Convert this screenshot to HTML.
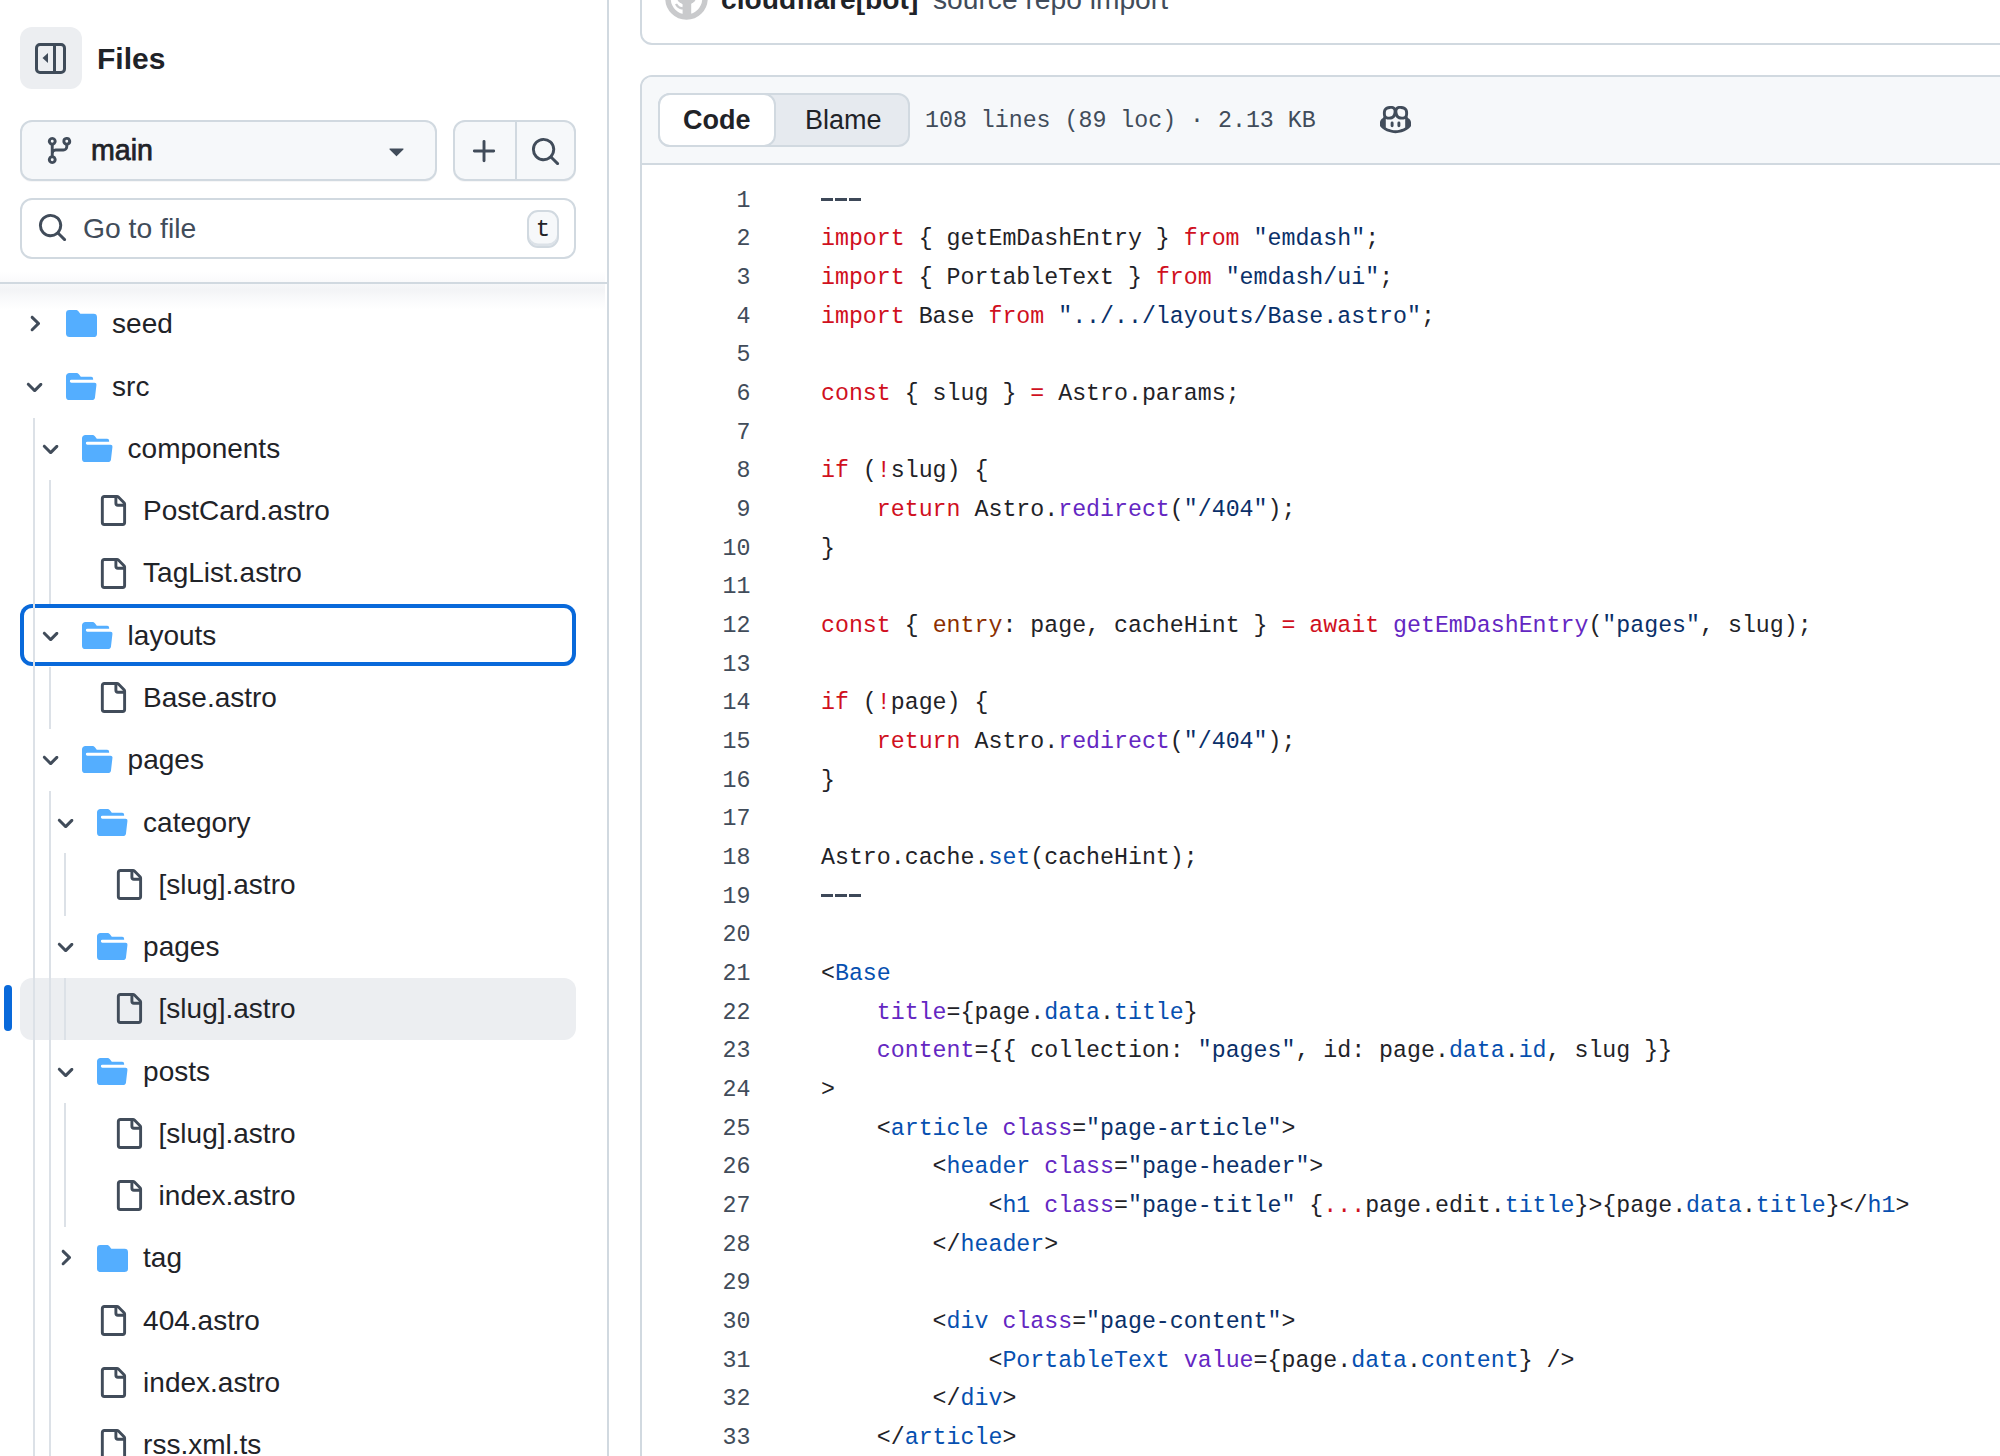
<!DOCTYPE html>
<html><head><meta charset="utf-8">
<style>
*{box-sizing:border-box}
html,body{margin:0;padding:0}
body{width:2000px;height:1456px;overflow:hidden;position:relative;background:#fff;font-family:"Liberation Sans",sans-serif;color:#1f2328}
.abs{position:absolute}
svg{display:block}
/* sidebar */
#side{position:absolute;left:0;top:0;width:607px;height:1456px;background:#fff}
#sideborder{position:absolute;left:607px;top:0;width:2px;height:1456px;background:#d1d9e0}
.btn{position:absolute;border:2px solid #d1d9e0;border-radius:12px;background:#f6f8fa}
#hdrline{position:absolute;left:-20px;top:282px;width:627px;height:2px;background:#d1d9e0;}
#hdrshadow{position:absolute;left:0;top:272px;width:605px;height:38px;background:linear-gradient(rgba(240,242,245,0) 0px,rgba(244,245,247,0.5) 10px,rgba(244,245,247,0.9) 13px,#f3f4f6 18px,rgba(246,247,249,0.7) 26px,rgba(255,255,255,0) 38px)}
.row{position:absolute;left:20px;width:556px;height:62px;border-radius:12px}
.row .ic{position:absolute;top:15.5px;width:31px;height:31px}
.row .ch{position:absolute;top:19.4px;width:23.2px;height:23.2px}
.row .tn{position:absolute;top:0.4px;height:62px;line-height:62px;font-size:28px;color:#1f2328;white-space:nowrap}
.row.sel{background:#eceef1}
.row.focus{box-shadow:inset 0 0 0 4px #0969da}
.guide{position:absolute;width:2px;background:#dce1e7}
/* main */
.ln{position:absolute;left:0;height:38.67px;line-height:38.67px;white-space:pre;font-family:"Liberation Mono",monospace;font-size:23.25px;color:#1f2328}
.ln .num{position:absolute;left:647.5px;width:103px;text-align:right;color:#414c5a}
.ln .src{position:absolute;left:821px}
</style></head><body>
<div id="side">
  <div class="abs" style="left:20px;top:27px;width:62px;height:62px;border-radius:12px;background:#eceef1"></div>
  <svg class="abs" style="left:35px;top:43px" width="31" height="31" viewBox="0 0 31 31">
    <rect x="1.5" y="1.5" width="28" height="28" rx="3.5" fill="none" stroke="#3f4b59" stroke-width="3"/>
    <rect x="18" y="1" width="3" height="29" fill="#3f4b59"/>
    <path d="M7.5 15 L13 10 L13 20 Z" fill="#3f4b59"/>
  </svg>
  <div class="abs" style="left:97px;top:38.5px;font-size:30px;font-weight:bold;line-height:40px">Files</div>

  <div class="btn" style="left:20px;top:120px;width:417px;height:61px;box-shadow:0 1px 0 rgba(31,35,40,0.04)"></div>
  <svg class="abs" style="left:44.4px;top:135px" width="31" height="31" viewBox="0 0 16 16"><path fill="#414c5a" d="M9.5 3.25a2.25 2.25 0 1 1 3 2.122V6A2.5 2.5 0 0 1 10 8.5H6a1 1 0 0 0-1 1v1.128a2.251 2.251 0 1 1-1.5 0V5.372a2.25 2.25 0 1 1 1.5 0v1.836A2.493 2.493 0 0 1 6 7h4a1 1 0 0 0 1-1v-.628A2.25 2.25 0 0 1 9.5 3.25Zm-6 0a.75.75 0 1 0 1.5 0 .75.75 0 0 0-1.5 0Zm8.25-.75a.75.75 0 1 0 0 1.5.75.75 0 0 0 0-1.5ZM4.25 12a.75.75 0 1 0 0 1.5.75.75 0 0 0 0-1.5Z"/></svg>
  <div class="abs" style="left:91px;top:129.8px;font-size:28.6px;line-height:40px;-webkit-text-stroke:0.75px #1f2328">main</div>
  <svg class="abs" style="left:381.2px;top:135px" width="31" height="31" viewBox="0 0 16 16"><path fill="#414c5a" d="m4.427 7.427 3.396 3.396a.25.25 0 0 0 .354 0l3.396-3.396A.25.25 0 0 0 11.396 7H4.604a.25.25 0 0 0-.177.427Z"/></svg>

  <div class="btn" style="left:453px;top:120px;width:123px;height:61px;box-shadow:0 1px 0 rgba(31,35,40,0.04)"></div>
  <div class="abs" style="left:514.5px;top:121px;width:2px;height:59px;background:#d1d9e0"></div>
  <svg class="abs" style="left:469px;top:135.5px" width="31" height="31" viewBox="0 0 16 16"><path fill="#414c5a" d="M7.75 2a.75.75 0 0 1 .75.75V7h4.25a.75.75 0 0 1 0 1.5H8.5v4.25a.75.75 0 0 1-1.5 0V8.5H2.75a.75.75 0 0 1 0-1.5H7V2.75A.75.75 0 0 1 7.75 2Z"/></svg>
  <svg class="abs" style="left:530.3px;top:135.5px" width="31" height="31" viewBox="0 0 16 16"><path fill="#414c5a" d="M10.68 11.74a6 6 0 0 1-7.922-8.982 6 6 0 0 1 8.982 7.922l3.04 3.04a.749.749 0 0 1-.326 1.275.749.749 0 0 1-.734-.215ZM11.5 7a4.499 4.499 0 1 0-8.997 0A4.499 4.499 0 0 0 11.5 7Z"/></svg>

  <div class="abs" style="left:20px;top:197.5px;width:556px;height:61px;border:2px solid #d1d9e0;border-radius:12px;background:#fff"></div>
  <svg class="abs" style="left:36.8px;top:212px" width="31" height="31" viewBox="0 0 16 16"><path fill="#414c5a" d="M10.68 11.74a6 6 0 0 1-7.922-8.982 6 6 0 0 1 8.982 7.922l3.04 3.04a.749.749 0 0 1-.326 1.275.749.749 0 0 1-.734-.215ZM11.5 7a4.499 4.499 0 1 0-8.997 0A4.499 4.499 0 0 0 11.5 7Z"/></svg>
  <div class="abs" style="left:83px;top:208px;font-size:28.3px;line-height:40px;color:#414c5a">Go to file</div>
  <div class="abs" style="left:527px;top:210px;width:32px;height:38px;border:2px solid #d1d9e0;border-radius:11px;background:#f6f8fa;box-shadow:inset 0 -2.5px 0 #dce2e8"></div>
  <div class="abs" style="left:527px;top:211.5px;width:32px;height:36px;text-align:center;font-size:24px;line-height:36px;font-family:'Liberation Mono',monospace">t</div>

  <div id="hdrshadow"></div>
  <div id="hdrline"></div>
  <div class="row" style="top:292.90px"><div class="ch" style="left:3.3px"><svg viewBox="0 0 12 12" width="23.2" height="23.2"><path fill="#414c5a" d="M4.7 10c-.2 0-.4-.1-.5-.2-.3-.3-.3-.8 0-1.1L6.9 6 4.2 3.3c-.3-.3-.3-.8 0-1.1.3-.3.8-.3 1.1 0l3.3 3.2c.3.3.3.8 0 1.1L5.3 9.7c-.2.2-.4.3-.6.3Z"/></svg></div><div class="ic" style="left:46.0px"><svg viewBox="0 0 16 16" width="31" height="31"><path fill="#54aeff" d="M1.75 1A1.75 1.75 0 0 0 0 2.75v10.5C0 14.216.784 15 1.75 15h12.5A1.75 1.75 0 0 0 16 13.25v-8.5A1.75 1.75 0 0 0 14.25 3H7.5a.25.25 0 0 1-.2-.1l-.9-1.2C6.07 1.26 5.55 1 5 1H1.75Z"/></svg></div><div class="tn" style="left:92.1px">seed</div></div>
<div class="row" style="top:355.18px"><div class="ch" style="left:3.3px"><svg viewBox="0 0 12 12" width="23.2" height="23.2"><path fill="#414c5a" d="M6 8.825c-.2 0-.4-.1-.5-.2l-3.3-3.3c-.3-.3-.3-.8 0-1.1.3-.3.8-.3 1.1 0L6 7.025l2.7-2.7c.3-.3.8-.3 1.1 0 .3.3.3.8 0 1.1l-3.2 3.2c-.2.2-.4.2-.6.2Z"/></svg></div><div class="ic" style="left:46.0px"><svg viewBox="0 0 16 16" width="31" height="31"><path fill="#54aeff" d="M.513 1.513A1.75 1.75 0 0 1 1.75 1h3.5c.55 0 1.07.26 1.4.7l.9 1.2a.25.25 0 0 0 .2.1H13a1 1 0 0 1 1 1v.5H2.75a.75.75 0 0 0 0 1.5h11.978a1 1 0 0 1 .994 1.117L15 13.25A1.75 1.75 0 0 1 13.25 15H1.75A1.75 1.75 0 0 1 0 13.25V2.75c0-.464.184-.91.513-1.237Z"/></svg></div><div class="tn" style="left:92.1px">src</div></div>
<div class="row" style="top:417.46px"><div class="ch" style="left:18.8px"><svg viewBox="0 0 12 12" width="23.2" height="23.2"><path fill="#414c5a" d="M6 8.825c-.2 0-.4-.1-.5-.2l-3.3-3.3c-.3-.3-.3-.8 0-1.1.3-.3.8-.3 1.1 0L6 7.025l2.7-2.7c.3-.3.8-.3 1.1 0 .3.3.3.8 0 1.1l-3.2 3.2c-.2.2-.4.2-.6.2Z"/></svg></div><div class="ic" style="left:61.5px"><svg viewBox="0 0 16 16" width="31" height="31"><path fill="#54aeff" d="M.513 1.513A1.75 1.75 0 0 1 1.75 1h3.5c.55 0 1.07.26 1.4.7l.9 1.2a.25.25 0 0 0 .2.1H13a1 1 0 0 1 1 1v.5H2.75a.75.75 0 0 0 0 1.5h11.978a1 1 0 0 1 .994 1.117L15 13.25A1.75 1.75 0 0 1 13.25 15H1.75A1.75 1.75 0 0 1 0 13.25V2.75c0-.464.184-.91.513-1.237Z"/></svg></div><div class="tn" style="left:107.6px">components</div></div>
<div class="row" style="top:479.74px"><div class="ic" style="left:77.1px"><svg viewBox="0 0 16 16" width="31" height="31"><path fill="#414c5a" d="M2 1.75C2 .784 2.784 0 3.75 0h6.586c.464 0 .909.184 1.237.513l2.914 2.914c.329.328.513.773.513 1.237v9.586A1.75 1.75 0 0 1 13.25 16h-9.5A1.75 1.75 0 0 1 2 14.25Zm1.75-.25a.25.25 0 0 0-.25.25v12.5c0 .138.112.25.25.25h9.5a.25.25 0 0 0 .25-.25V6h-2.75A1.75 1.75 0 0 1 9 4.25V1.5Zm6.75.062V4.25c0 .138.112.25.25.25h2.688l-.011-.013-2.914-2.914-.013-.011Z"/></svg></div><div class="tn" style="left:123.1px">PostCard.astro</div></div>
<div class="row" style="top:542.02px"><div class="ic" style="left:77.1px"><svg viewBox="0 0 16 16" width="31" height="31"><path fill="#414c5a" d="M2 1.75C2 .784 2.784 0 3.75 0h6.586c.464 0 .909.184 1.237.513l2.914 2.914c.329.328.513.773.513 1.237v9.586A1.75 1.75 0 0 1 13.25 16h-9.5A1.75 1.75 0 0 1 2 14.25Zm1.75-.25a.25.25 0 0 0-.25.25v12.5c0 .138.112.25.25.25h9.5a.25.25 0 0 0 .25-.25V6h-2.75A1.75 1.75 0 0 1 9 4.25V1.5Zm6.75.062V4.25c0 .138.112.25.25.25h2.688l-.011-.013-2.914-2.914-.013-.011Z"/></svg></div><div class="tn" style="left:123.1px">TagList.astro</div></div>
<div class="row focus" style="top:604.30px"><div class="ch" style="left:18.8px"><svg viewBox="0 0 12 12" width="23.2" height="23.2"><path fill="#414c5a" d="M6 8.825c-.2 0-.4-.1-.5-.2l-3.3-3.3c-.3-.3-.3-.8 0-1.1.3-.3.8-.3 1.1 0L6 7.025l2.7-2.7c.3-.3.8-.3 1.1 0 .3.3.3.8 0 1.1l-3.2 3.2c-.2.2-.4.2-.6.2Z"/></svg></div><div class="ic" style="left:61.5px"><svg viewBox="0 0 16 16" width="31" height="31"><path fill="#54aeff" d="M.513 1.513A1.75 1.75 0 0 1 1.75 1h3.5c.55 0 1.07.26 1.4.7l.9 1.2a.25.25 0 0 0 .2.1H13a1 1 0 0 1 1 1v.5H2.75a.75.75 0 0 0 0 1.5h11.978a1 1 0 0 1 .994 1.117L15 13.25A1.75 1.75 0 0 1 13.25 15H1.75A1.75 1.75 0 0 1 0 13.25V2.75c0-.464.184-.91.513-1.237Z"/></svg></div><div class="tn" style="left:107.6px">layouts</div></div>
<div class="row" style="top:666.58px"><div class="ic" style="left:77.1px"><svg viewBox="0 0 16 16" width="31" height="31"><path fill="#414c5a" d="M2 1.75C2 .784 2.784 0 3.75 0h6.586c.464 0 .909.184 1.237.513l2.914 2.914c.329.328.513.773.513 1.237v9.586A1.75 1.75 0 0 1 13.25 16h-9.5A1.75 1.75 0 0 1 2 14.25Zm1.75-.25a.25.25 0 0 0-.25.25v12.5c0 .138.112.25.25.25h9.5a.25.25 0 0 0 .25-.25V6h-2.75A1.75 1.75 0 0 1 9 4.25V1.5Zm6.75.062V4.25c0 .138.112.25.25.25h2.688l-.011-.013-2.914-2.914-.013-.011Z"/></svg></div><div class="tn" style="left:123.1px">Base.astro</div></div>
<div class="row" style="top:728.86px"><div class="ch" style="left:18.8px"><svg viewBox="0 0 12 12" width="23.2" height="23.2"><path fill="#414c5a" d="M6 8.825c-.2 0-.4-.1-.5-.2l-3.3-3.3c-.3-.3-.3-.8 0-1.1.3-.3.8-.3 1.1 0L6 7.025l2.7-2.7c.3-.3.8-.3 1.1 0 .3.3.3.8 0 1.1l-3.2 3.2c-.2.2-.4.2-.6.2Z"/></svg></div><div class="ic" style="left:61.5px"><svg viewBox="0 0 16 16" width="31" height="31"><path fill="#54aeff" d="M.513 1.513A1.75 1.75 0 0 1 1.75 1h3.5c.55 0 1.07.26 1.4.7l.9 1.2a.25.25 0 0 0 .2.1H13a1 1 0 0 1 1 1v.5H2.75a.75.75 0 0 0 0 1.5h11.978a1 1 0 0 1 .994 1.117L15 13.25A1.75 1.75 0 0 1 13.25 15H1.75A1.75 1.75 0 0 1 0 13.25V2.75c0-.464.184-.91.513-1.237Z"/></svg></div><div class="tn" style="left:107.6px">pages</div></div>
<div class="row" style="top:791.14px"><div class="ch" style="left:34.3px"><svg viewBox="0 0 12 12" width="23.2" height="23.2"><path fill="#414c5a" d="M6 8.825c-.2 0-.4-.1-.5-.2l-3.3-3.3c-.3-.3-.3-.8 0-1.1.3-.3.8-.3 1.1 0L6 7.025l2.7-2.7c.3-.3.8-.3 1.1 0 .3.3.3.8 0 1.1l-3.2 3.2c-.2.2-.4.2-.6.2Z"/></svg></div><div class="ic" style="left:77.0px"><svg viewBox="0 0 16 16" width="31" height="31"><path fill="#54aeff" d="M.513 1.513A1.75 1.75 0 0 1 1.75 1h3.5c.55 0 1.07.26 1.4.7l.9 1.2a.25.25 0 0 0 .2.1H13a1 1 0 0 1 1 1v.5H2.75a.75.75 0 0 0 0 1.5h11.978a1 1 0 0 1 .994 1.117L15 13.25A1.75 1.75 0 0 1 13.25 15H1.75A1.75 1.75 0 0 1 0 13.25V2.75c0-.464.184-.91.513-1.237Z"/></svg></div><div class="tn" style="left:123.1px">category</div></div>
<div class="row" style="top:853.42px"><div class="ic" style="left:92.6px"><svg viewBox="0 0 16 16" width="31" height="31"><path fill="#414c5a" d="M2 1.75C2 .784 2.784 0 3.75 0h6.586c.464 0 .909.184 1.237.513l2.914 2.914c.329.328.513.773.513 1.237v9.586A1.75 1.75 0 0 1 13.25 16h-9.5A1.75 1.75 0 0 1 2 14.25Zm1.75-.25a.25.25 0 0 0-.25.25v12.5c0 .138.112.25.25.25h9.5a.25.25 0 0 0 .25-.25V6h-2.75A1.75 1.75 0 0 1 9 4.25V1.5Zm6.75.062V4.25c0 .138.112.25.25.25h2.688l-.011-.013-2.914-2.914-.013-.011Z"/></svg></div><div class="tn" style="left:138.6px">[slug].astro</div></div>
<div class="row" style="top:915.70px"><div class="ch" style="left:34.3px"><svg viewBox="0 0 12 12" width="23.2" height="23.2"><path fill="#414c5a" d="M6 8.825c-.2 0-.4-.1-.5-.2l-3.3-3.3c-.3-.3-.3-.8 0-1.1.3-.3.8-.3 1.1 0L6 7.025l2.7-2.7c.3-.3.8-.3 1.1 0 .3.3.3.8 0 1.1l-3.2 3.2c-.2.2-.4.2-.6.2Z"/></svg></div><div class="ic" style="left:77.0px"><svg viewBox="0 0 16 16" width="31" height="31"><path fill="#54aeff" d="M.513 1.513A1.75 1.75 0 0 1 1.75 1h3.5c.55 0 1.07.26 1.4.7l.9 1.2a.25.25 0 0 0 .2.1H13a1 1 0 0 1 1 1v.5H2.75a.75.75 0 0 0 0 1.5h11.978a1 1 0 0 1 .994 1.117L15 13.25A1.75 1.75 0 0 1 13.25 15H1.75A1.75 1.75 0 0 1 0 13.25V2.75c0-.464.184-.91.513-1.237Z"/></svg></div><div class="tn" style="left:123.1px">pages</div></div>
<div class="row sel" style="top:977.98px"><div class="ic" style="left:92.6px"><svg viewBox="0 0 16 16" width="31" height="31"><path fill="#414c5a" d="M2 1.75C2 .784 2.784 0 3.75 0h6.586c.464 0 .909.184 1.237.513l2.914 2.914c.329.328.513.773.513 1.237v9.586A1.75 1.75 0 0 1 13.25 16h-9.5A1.75 1.75 0 0 1 2 14.25Zm1.75-.25a.25.25 0 0 0-.25.25v12.5c0 .138.112.25.25.25h9.5a.25.25 0 0 0 .25-.25V6h-2.75A1.75 1.75 0 0 1 9 4.25V1.5Zm6.75.062V4.25c0 .138.112.25.25.25h2.688l-.011-.013-2.914-2.914-.013-.011Z"/></svg></div><div class="tn" style="left:138.6px">[slug].astro</div></div>
<div class="row" style="top:1040.26px"><div class="ch" style="left:34.3px"><svg viewBox="0 0 12 12" width="23.2" height="23.2"><path fill="#414c5a" d="M6 8.825c-.2 0-.4-.1-.5-.2l-3.3-3.3c-.3-.3-.3-.8 0-1.1.3-.3.8-.3 1.1 0L6 7.025l2.7-2.7c.3-.3.8-.3 1.1 0 .3.3.3.8 0 1.1l-3.2 3.2c-.2.2-.4.2-.6.2Z"/></svg></div><div class="ic" style="left:77.0px"><svg viewBox="0 0 16 16" width="31" height="31"><path fill="#54aeff" d="M.513 1.513A1.75 1.75 0 0 1 1.75 1h3.5c.55 0 1.07.26 1.4.7l.9 1.2a.25.25 0 0 0 .2.1H13a1 1 0 0 1 1 1v.5H2.75a.75.75 0 0 0 0 1.5h11.978a1 1 0 0 1 .994 1.117L15 13.25A1.75 1.75 0 0 1 13.25 15H1.75A1.75 1.75 0 0 1 0 13.25V2.75c0-.464.184-.91.513-1.237Z"/></svg></div><div class="tn" style="left:123.1px">posts</div></div>
<div class="row" style="top:1102.54px"><div class="ic" style="left:92.6px"><svg viewBox="0 0 16 16" width="31" height="31"><path fill="#414c5a" d="M2 1.75C2 .784 2.784 0 3.75 0h6.586c.464 0 .909.184 1.237.513l2.914 2.914c.329.328.513.773.513 1.237v9.586A1.75 1.75 0 0 1 13.25 16h-9.5A1.75 1.75 0 0 1 2 14.25Zm1.75-.25a.25.25 0 0 0-.25.25v12.5c0 .138.112.25.25.25h9.5a.25.25 0 0 0 .25-.25V6h-2.75A1.75 1.75 0 0 1 9 4.25V1.5Zm6.75.062V4.25c0 .138.112.25.25.25h2.688l-.011-.013-2.914-2.914-.013-.011Z"/></svg></div><div class="tn" style="left:138.6px">[slug].astro</div></div>
<div class="row" style="top:1164.82px"><div class="ic" style="left:92.6px"><svg viewBox="0 0 16 16" width="31" height="31"><path fill="#414c5a" d="M2 1.75C2 .784 2.784 0 3.75 0h6.586c.464 0 .909.184 1.237.513l2.914 2.914c.329.328.513.773.513 1.237v9.586A1.75 1.75 0 0 1 13.25 16h-9.5A1.75 1.75 0 0 1 2 14.25Zm1.75-.25a.25.25 0 0 0-.25.25v12.5c0 .138.112.25.25.25h9.5a.25.25 0 0 0 .25-.25V6h-2.75A1.75 1.75 0 0 1 9 4.25V1.5Zm6.75.062V4.25c0 .138.112.25.25.25h2.688l-.011-.013-2.914-2.914-.013-.011Z"/></svg></div><div class="tn" style="left:138.6px">index.astro</div></div>
<div class="row" style="top:1227.10px"><div class="ch" style="left:34.3px"><svg viewBox="0 0 12 12" width="23.2" height="23.2"><path fill="#414c5a" d="M4.7 10c-.2 0-.4-.1-.5-.2-.3-.3-.3-.8 0-1.1L6.9 6 4.2 3.3c-.3-.3-.3-.8 0-1.1.3-.3.8-.3 1.1 0l3.3 3.2c.3.3.3.8 0 1.1L5.3 9.7c-.2.2-.4.3-.6.3Z"/></svg></div><div class="ic" style="left:77.0px"><svg viewBox="0 0 16 16" width="31" height="31"><path fill="#54aeff" d="M1.75 1A1.75 1.75 0 0 0 0 2.75v10.5C0 14.216.784 15 1.75 15h12.5A1.75 1.75 0 0 0 16 13.25v-8.5A1.75 1.75 0 0 0 14.25 3H7.5a.25.25 0 0 1-.2-.1l-.9-1.2C6.07 1.26 5.55 1 5 1H1.75Z"/></svg></div><div class="tn" style="left:123.1px">tag</div></div>
<div class="row" style="top:1289.38px"><div class="ic" style="left:77.1px"><svg viewBox="0 0 16 16" width="31" height="31"><path fill="#414c5a" d="M2 1.75C2 .784 2.784 0 3.75 0h6.586c.464 0 .909.184 1.237.513l2.914 2.914c.329.328.513.773.513 1.237v9.586A1.75 1.75 0 0 1 13.25 16h-9.5A1.75 1.75 0 0 1 2 14.25Zm1.75-.25a.25.25 0 0 0-.25.25v12.5c0 .138.112.25.25.25h9.5a.25.25 0 0 0 .25-.25V6h-2.75A1.75 1.75 0 0 1 9 4.25V1.5Zm6.75.062V4.25c0 .138.112.25.25.25h2.688l-.011-.013-2.914-2.914-.013-.011Z"/></svg></div><div class="tn" style="left:123.1px">404.astro</div></div>
<div class="row" style="top:1351.66px"><div class="ic" style="left:77.1px"><svg viewBox="0 0 16 16" width="31" height="31"><path fill="#414c5a" d="M2 1.75C2 .784 2.784 0 3.75 0h6.586c.464 0 .909.184 1.237.513l2.914 2.914c.329.328.513.773.513 1.237v9.586A1.75 1.75 0 0 1 13.25 16h-9.5A1.75 1.75 0 0 1 2 14.25Zm1.75-.25a.25.25 0 0 0-.25.25v12.5c0 .138.112.25.25.25h9.5a.25.25 0 0 0 .25-.25V6h-2.75A1.75 1.75 0 0 1 9 4.25V1.5Zm6.75.062V4.25c0 .138.112.25.25.25h2.688l-.011-.013-2.914-2.914-.013-.011Z"/></svg></div><div class="tn" style="left:123.1px">index.astro</div></div>
<div class="row" style="top:1413.94px"><div class="ic" style="left:77.1px"><svg viewBox="0 0 16 16" width="31" height="31"><path fill="#414c5a" d="M2 1.75C2 .784 2.784 0 3.75 0h6.586c.464 0 .909.184 1.237.513l2.914 2.914c.329.328.513.773.513 1.237v9.586A1.75 1.75 0 0 1 13.25 16h-9.5A1.75 1.75 0 0 1 2 14.25Zm1.75-.25a.25.25 0 0 0-.25.25v12.5c0 .138.112.25.25.25h9.5a.25.25 0 0 0 .25-.25V6h-2.75A1.75 1.75 0 0 1 9 4.25V1.5Zm6.75.062V4.25c0 .138.112.25.25.25h2.688l-.011-.013-2.914-2.914-.013-.011Z"/></svg></div><div class="tn" style="left:123.1px">rss.xml.ts</div></div>
  <div class="guide" style="left:33px;top:417.5px;height:1121.0px"></div>
<div class="guide" style="left:48.5px;top:479.7px;height:124.6px"></div>
<div class="guide" style="left:48.5px;top:666.6px;height:62.3px"></div>
<div class="guide" style="left:48.5px;top:791.1px;height:747.4px"></div>
<div class="guide" style="left:64px;top:853.4px;height:62.3px"></div>
<div class="guide" style="left:64px;top:978.0px;height:62.3px"></div>
<div class="guide" style="left:64px;top:1102.5px;height:124.6px"></div>
  <div class="abs" style="left:4px;top:985px;width:8px;height:46px;border-radius:4px;background:#0969da"></div>
</div>
<div id="sideborder"></div>

<!-- commit box -->
<div class="abs" style="left:640px;top:-40px;width:1500px;height:85px;border:2px solid #d1d9e0;border-radius:12px;background:#fff"></div>
<svg class="abs" style="left:665.4px;top:-23.2px" width="43" height="43" viewBox="0 0 43 43">
  <circle cx="21.5" cy="21.5" r="18.5" fill="#fff" stroke="#c9cacc" stroke-width="5.5"/>
  <ellipse cx="21.5" cy="19" rx="10" ry="9" fill="#c9cacc"/>
  <rect x="17.6" y="22" width="8.6" height="16" fill="#c9cacc"/>
  <path d="M11 27 Q14 32 18 31" stroke="#c9cacc" stroke-width="2.4" fill="none"/>
</svg>
<div class="abs" style="left:721px;top:-21px;font-size:28.2px;line-height:40px;font-weight:bold;color:#1f2328;white-space:nowrap">cloudflare[bot]</div>
<div class="abs" style="left:933px;top:-21px;font-size:28.2px;line-height:40px;color:#414c5a;white-space:nowrap">source repo import</div>

<!-- file box -->
<div class="abs" style="left:640px;top:75px;width:1500px;height:1500px;border:2px solid #d1d9e0;border-radius:12px;background:#fff;overflow:hidden">
  <div class="abs" style="left:0;top:0;width:100%;height:87.5px;background:#f6f8fa;border-bottom:2px solid #d1d9e0"></div>
</div>
<div class="abs" style="left:658px;top:93px;width:252px;height:54px;border:2px solid #d1d9e0;border-radius:12px;background:#e6eaef"></div>
<div class="abs" style="left:658px;top:93px;width:118px;height:54px;border:2px solid #d1d9e0;border-radius:12px;background:#fff"></div>
<div class="abs" style="left:683px;top:100px;font-size:27px;line-height:40px;font-weight:bold">Code</div>
<div class="abs" style="left:805px;top:100px;font-size:27px;line-height:40px">Blame</div>
<div class="abs" style="left:925px;top:101px;font-size:23.25px;line-height:40px;font-family:'Liberation Mono',monospace;color:#414c5a;white-space:pre">108 lines (89 loc) · 2.13 KB</div>
<svg class="abs" style="left:1380px;top:104px" width="31" height="31" viewBox="0 0 16 16"><path fill="#414c5a" d="M7.998 15.035c-4.562 0-7.873-2.914-7.998-3.749V9.338c.085-.628.677-1.686 1.588-2.065.013-.07.024-.143.036-.218.029-.183.06-.384.126-.612-.201-.508-.254-1.084-.254-1.656 0-.87.128-1.769.693-2.484.579-.733 1.494-1.124 2.724-1.261 1.206-.134 2.262.034 2.944.765.05.053.096.108.139.165.044-.057.094-.112.143-.165.682-.731 1.738-.899 2.944-.765 1.23.137 2.145.528 2.724 1.261.566.715.693 1.614.693 2.484 0 .572-.053 1.148-.254 1.656.066.228.098.429.126.612.012.076.024.148.037.218.924.385 1.522 1.471 1.591 2.095v1.872c0 .766-3.351 3.795-8.002 3.795Zm0-1.485c2.28 0 4.584-1.11 5.002-1.433V7.862l-.023-.116c-.49.21-1.075.291-1.727.291-1.146 0-2.059-.327-2.71-.991A3.222 3.222 0 0 1 8 6.303a3.24 3.240 0 0 1-.544.743c-.65.664-1.563.991-2.71.991-.652 0-1.236-.081-1.727-.291l-.023.116v4.255c.419.323 2.722 1.433 5.002 1.433ZM6.762 2.83c-.193-.206-.637-.413-1.682-.297-1.019.113-1.479.404-1.713.7-.247.312-.369.789-.369 1.554 0 .793.129 1.171.308 1.371.162.181.519.379 1.442.379.853 0 1.339-.235 1.638-.54.315-.322.527-.827.617-1.553.117-.935-.037-1.395-.241-1.614Zm4.155-.297c-1.044-.116-1.488.091-1.681.297-.204.219-.359.679-.242 1.614.091.726.303 1.231.618 1.553.299.305.784.54 1.638.54.922 0 1.280-.198 1.442-.379.179-.2.308-.578.308-1.371 0-.765-.123-1.242-.37-1.554-.233-.296-.693-.587-1.713-.7Z"/><path fill="#414c5a" d="M6.25 9.037a.75.75 0 0 1 .75.75v1.501a.75.75 0 0 1-1.5 0V9.787a.75.75 0 0 1 .75-.75Zm4.25.75v1.501a.75.75 0 0 1-1.5 0V9.787a.75.75 0 0 1 1.5 0Z"/></svg>

<div class="ln" style="top:181.50px"><span class="num">1</span><span class="src"><span style="position:absolute;left:0.2px;top:16.9px;width:42px;height:2.3px;background:repeating-linear-gradient(90deg,#3d4858 0 11.8px,transparent 11.8px 13.98px)"></span></span></div>
<div class="ln" style="top:220.17px"><span class="num">2</span><span class="src"><span style="color:#d0101e">import</span> { getEmDashEntry } <span style="color:#d0101e">from</span> <span style="color:#0a3069">"emdash"</span>;</span></div>
<div class="ln" style="top:258.84px"><span class="num">3</span><span class="src"><span style="color:#d0101e">import</span> { PortableText } <span style="color:#d0101e">from</span> <span style="color:#0a3069">"emdash/ui"</span>;</span></div>
<div class="ln" style="top:297.51px"><span class="num">4</span><span class="src"><span style="color:#d0101e">import</span> Base <span style="color:#d0101e">from</span> <span style="color:#0a3069">"../../layouts/Base.astro"</span>;</span></div>
<div class="ln" style="top:336.18px"><span class="num">5</span><span class="src"></span></div>
<div class="ln" style="top:374.85px"><span class="num">6</span><span class="src"><span style="color:#d0101e">const</span> { slug } <span style="color:#d0101e">=</span> Astro.params;</span></div>
<div class="ln" style="top:413.52px"><span class="num">7</span><span class="src"></span></div>
<div class="ln" style="top:452.19px"><span class="num">8</span><span class="src"><span style="color:#d0101e">if</span> (<span style="color:#d0101e">!</span>slug) {</span></div>
<div class="ln" style="top:490.86px"><span class="num">9</span><span class="src">    <span style="color:#d0101e">return</span> Astro.<span style="color:#6427c2">redirect</span>(<span style="color:#0a3069">"/404"</span>);</span></div>
<div class="ln" style="top:529.53px"><span class="num">10</span><span class="src">}</span></div>
<div class="ln" style="top:568.20px"><span class="num">11</span><span class="src"></span></div>
<div class="ln" style="top:606.87px"><span class="num">12</span><span class="src"><span style="color:#d0101e">const</span> { <span style="color:#8c2f00">entry</span>: page, cacheHint } <span style="color:#d0101e">=</span> <span style="color:#d0101e">await</span> <span style="color:#6427c2">getEmDashEntry</span>(<span style="color:#0a3069">"pages"</span>, slug);</span></div>
<div class="ln" style="top:645.54px"><span class="num">13</span><span class="src"></span></div>
<div class="ln" style="top:684.21px"><span class="num">14</span><span class="src"><span style="color:#d0101e">if</span> (<span style="color:#d0101e">!</span>page) {</span></div>
<div class="ln" style="top:722.88px"><span class="num">15</span><span class="src">    <span style="color:#d0101e">return</span> Astro.<span style="color:#6427c2">redirect</span>(<span style="color:#0a3069">"/404"</span>);</span></div>
<div class="ln" style="top:761.55px"><span class="num">16</span><span class="src">}</span></div>
<div class="ln" style="top:800.22px"><span class="num">17</span><span class="src"></span></div>
<div class="ln" style="top:838.89px"><span class="num">18</span><span class="src">Astro.cache.<span style="color:#0650b0">set</span>(cacheHint);</span></div>
<div class="ln" style="top:877.56px"><span class="num">19</span><span class="src"><span style="position:absolute;left:0.2px;top:16.9px;width:42px;height:2.3px;background:repeating-linear-gradient(90deg,#3d4858 0 11.8px,transparent 11.8px 13.98px)"></span></span></div>
<div class="ln" style="top:916.23px"><span class="num">20</span><span class="src"></span></div>
<div class="ln" style="top:954.90px"><span class="num">21</span><span class="src">&lt;<span style="color:#0650b0">Base</span></span></div>
<div class="ln" style="top:993.57px"><span class="num">22</span><span class="src">    <span style="color:#6427c2">title</span>={page.<span style="color:#0650b0">data</span>.<span style="color:#0650b0">title</span>}</span></div>
<div class="ln" style="top:1032.24px"><span class="num">23</span><span class="src">    <span style="color:#6427c2">content</span>={{ collection: <span style="color:#0a3069">"pages"</span>, id: page.<span style="color:#0650b0">data</span>.<span style="color:#0650b0">id</span>, slug }}</span></div>
<div class="ln" style="top:1070.91px"><span class="num">24</span><span class="src">&gt;</span></div>
<div class="ln" style="top:1109.58px"><span class="num">25</span><span class="src">    &lt;<span style="color:#0650b0">article</span> <span style="color:#6427c2">class</span>=<span style="color:#0a3069">"page-article"</span>&gt;</span></div>
<div class="ln" style="top:1148.25px"><span class="num">26</span><span class="src">        &lt;<span style="color:#0650b0">header</span> <span style="color:#6427c2">class</span>=<span style="color:#0a3069">"page-header"</span>&gt;</span></div>
<div class="ln" style="top:1186.92px"><span class="num">27</span><span class="src">            &lt;<span style="color:#0650b0">h1</span> <span style="color:#6427c2">class</span>=<span style="color:#0a3069">"page-title"</span> {<span style="color:#d0101e">...</span>page.edit.<span style="color:#0650b0">title</span>}&gt;{page.<span style="color:#0650b0">data</span>.<span style="color:#0650b0">title</span>}&lt;/<span style="color:#0650b0">h1</span>&gt;</span></div>
<div class="ln" style="top:1225.59px"><span class="num">28</span><span class="src">        &lt;/<span style="color:#0650b0">header</span>&gt;</span></div>
<div class="ln" style="top:1264.26px"><span class="num">29</span><span class="src"></span></div>
<div class="ln" style="top:1302.93px"><span class="num">30</span><span class="src">        &lt;<span style="color:#0650b0">div</span> <span style="color:#6427c2">class</span>=<span style="color:#0a3069">"page-content"</span>&gt;</span></div>
<div class="ln" style="top:1341.60px"><span class="num">31</span><span class="src">            &lt;<span style="color:#0650b0">PortableText</span> <span style="color:#6427c2">value</span>={page.<span style="color:#0650b0">data</span>.<span style="color:#0650b0">content</span>} /&gt;</span></div>
<div class="ln" style="top:1380.27px"><span class="num">32</span><span class="src">        &lt;/<span style="color:#0650b0">div</span>&gt;</span></div>
<div class="ln" style="top:1418.94px"><span class="num">33</span><span class="src">    &lt;/<span style="color:#0650b0">article</span>&gt;</span></div>
<div class="ln" style="top:1457.61px"><span class="num">34</span><span class="src">&lt;/<span style="color:#0650b0">Base</span>&gt;</span></div>
</body></html>
